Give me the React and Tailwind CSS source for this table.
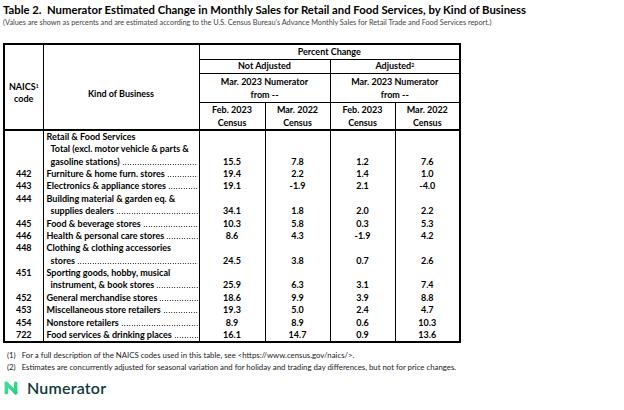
import React from "react";

const rows = [
  { code: "", text: "Retail & Food Services", indent: false, dots: false, v: null },
  { code: "", text: "Total (excl. motor vehicle & parts &", indent: true, dots: false, v: null },
  { code: "", text: "gasoline stations)", indent: true, dots: true, v: ["15.5", "7.8", "1.2", "7.6"] },
  { code: "442", text: "Furniture & home furn. stores", indent: false, dots: true, v: ["19.4", "2.2", "1.4", "1.0"] },
  { code: "443", text: "Electronics & appliance stores", indent: false, dots: true, v: ["19.1", "-1.9", "2.1", "-4.0"] },
  { code: "444", text: "Building material & garden eq. &", indent: false, dots: false, v: null },
  { code: "", text: "supplies dealers", indent: true, dots: true, v: ["34.1", "1.8", "2.0", "2.2"] },
  { code: "445", text: "Food & beverage stores", indent: false, dots: true, v: ["10.3", "5.8", "0.3", "5.3"] },
  { code: "446", text: "Health & personal care stores", indent: false, dots: true, v: ["8.6", "4.3", "-1.9", "4.2"] },
  { code: "448", text: "Clothing & clothing accessories", indent: false, dots: false, v: null },
  { code: "", text: "stores", indent: true, dots: true, v: ["24.5", "3.8", "0.7", "2.6"] },
  { code: "451", text: "Sporting goods, hobby, musical", indent: false, dots: false, v: null },
  { code: "", text: "instrument, & book stores", indent: true, dots: true, v: ["25.9", "6.3", "3.1", "7.4"] },
  { code: "452", text: "General merchandise stores", indent: false, dots: true, v: ["18.6", "9.9", "3.9", "8.8"] },
  { code: "453", text: "Miscellaneous store retailers", indent: false, dots: true, v: ["19.3", "5.0", "2.4", "4.7"] },
  { code: "454", text: "Nonstore retailers", indent: false, dots: true, v: ["8.9", "8.9", "0.6", "10.3"] },
  { code: "722", text: "Food services & drinking places", indent: false, dots: true, v: ["16.1", "14.7", "0.9", "13.6"] },
];

function KindCell({ r }) {
  return (
    <div className={`flex items-end overflow-hidden whitespace-nowrap ${r.indent ? "pl-[7px]" : "pl-[3px]"}`}>
      <span className="shrink-0">{r.text}</span>
      {r.dots && (
        <span className="mb-[3px] ml-[2px] mr-[1px] h-[1px] min-w-0 flex-1 bg-[radial-gradient(circle,#000_0.6px,transparent_0.7px)] bg-[length:2.5px_1px] bg-repeat-x" />
      )}
    </div>
  );
}

function NumeratorLogo() {
  return (
    <div className="flex items-center gap-[9px] pl-[4px]">
      <svg width="14" height="14" viewBox="0 0 14 14">
        <defs>
          <linearGradient id="ng" gradientUnits="userSpaceOnUse" x1="0" y1="0" x2="14" y2="14">
            <stop offset="0" stopColor="#43e59f" />
            <stop offset="1" stopColor="#1ccf78" />
          </linearGradient>
        </defs>
        <g stroke="url(#ng)" strokeWidth="3.4" strokeLinecap="round" fill="none">
          <path d="M2.3 2.3 V11.7" />
          <path d="M11.7 2.3 V11.7" />
          <path d="M2.3 2.3 L11.7 11.7" />
        </g>
      </svg>
      <span className="font-['Lato',sans-serif] text-[16px] font-semibold leading-none tracking-[0.2px] text-[#0f3b3a]">
        Numerator
      </span>
    </div>
  );
}

export default function App() {
  const th = "border border-black p-0 text-center align-middle font-bold";
  return (
    <div className="h-[410px] w-[624px] overflow-hidden bg-white font-['Lato','Liberation_Sans',sans-serif] text-black">
      <div className="pl-[3px] pt-[3px] text-[11.3px] font-bold leading-[14px] whitespace-nowrap">
        Table 2.&nbsp; Numerator Estimated Change in Monthly Sales for Retail and Food Services, by Kind of Business
      </div>
      <div className="pl-[3px] pt-[1px] text-[7.3px] leading-[10px] text-[#444] whitespace-nowrap">
        (Values are shown as percents and are estimated according to the U.S. Census Bureau's Advance Monthly Sales for Retail Trade and Food Services report.)
      </div>

      <div className="pl-[3px] pt-[15px]">
        <table className="w-[456px] table-fixed border-collapse border-2 border-black text-[9px] leading-[12px]">
          <colgroup>
            <col className="w-[39px]" />
            <col className="w-[156px]" />
            <col className="w-[66px]" />
            <col className="w-[65px]" />
            <col className="w-[65px]" />
            <col className="w-[65px]" />
          </colgroup>
          <thead>
            <tr className="h-[15px]">
              <th rowSpan={4} className={`${th} border-b-2 pt-[12px]`}>
                <div>NAICS<sup className="text-[5px]">1</sup></div>
                <div>code</div>
              </th>
              <th rowSpan={4} className={`${th} border-b-2 pt-[14px]`}>Kind of Business</th>
              <th colSpan={4} className={th}>Percent Change</th>
            </tr>
            <tr className="h-[14px]">
              <th colSpan={2} className={th}>Not Adjusted</th>
              <th colSpan={2} className={th}>
                Adjusted<sup className="text-[5px]">2</sup>
              </th>
            </tr>
            <tr className="h-[29px]">
              <th colSpan={2} className={th}>
                <div className="leading-[13px]">Mar. 2023 Numerator</div>
                <div className="leading-[13px]">from --</div>
              </th>
              <th colSpan={2} className={th}>
                <div className="leading-[13px]">Mar. 2023 Numerator</div>
                <div className="leading-[13px]">from --</div>
              </th>
            </tr>
            <tr className="h-[28px]">
              {["Feb. 2023", "Mar. 2022", "Feb. 2023", "Mar. 2022"].map((t, i) => (
                <th key={i} className={`${th} border-b-2`}>
                  <div className="leading-[13px]">{t}</div>
                  <div className="leading-[13px]">Census</div>
                </th>
              ))}
            </tr>
          </thead>
          <tbody className="font-bold">
            {rows.map((r, i) => (
              <tr key={i} className="h-[12.4px]">
                <td className="border-x border-black p-0 text-center">{r.code}</td>
                <td className="border-x border-black p-0">
                  <KindCell r={r} />
                </td>
                {[0, 1, 2, 3].map((k) => (
                  <td key={k} className="border-x border-black p-0 text-center">
                    {r.v ? r.v[k] : ""}
                  </td>
                ))}
              </tr>
            ))}
          </tbody>
        </table>
      </div>

      <div className="pl-[7px] pt-[6px] text-[7.8px] leading-[12px] text-[#222] whitespace-nowrap">
        <div>(1)&nbsp;&nbsp; For a full description of the NAICS codes used in this table, see &lt;https://www.census.gov/naics/&gt;.</div>
        <div>(2)&nbsp;&nbsp; Estimates are concurrently adjusted for seasonal variation and for holiday and trading day differences, but not for price changes.</div>
      </div>

      <div className="pt-[7px]">
        <NumeratorLogo />
      </div>
    </div>
  );
}
